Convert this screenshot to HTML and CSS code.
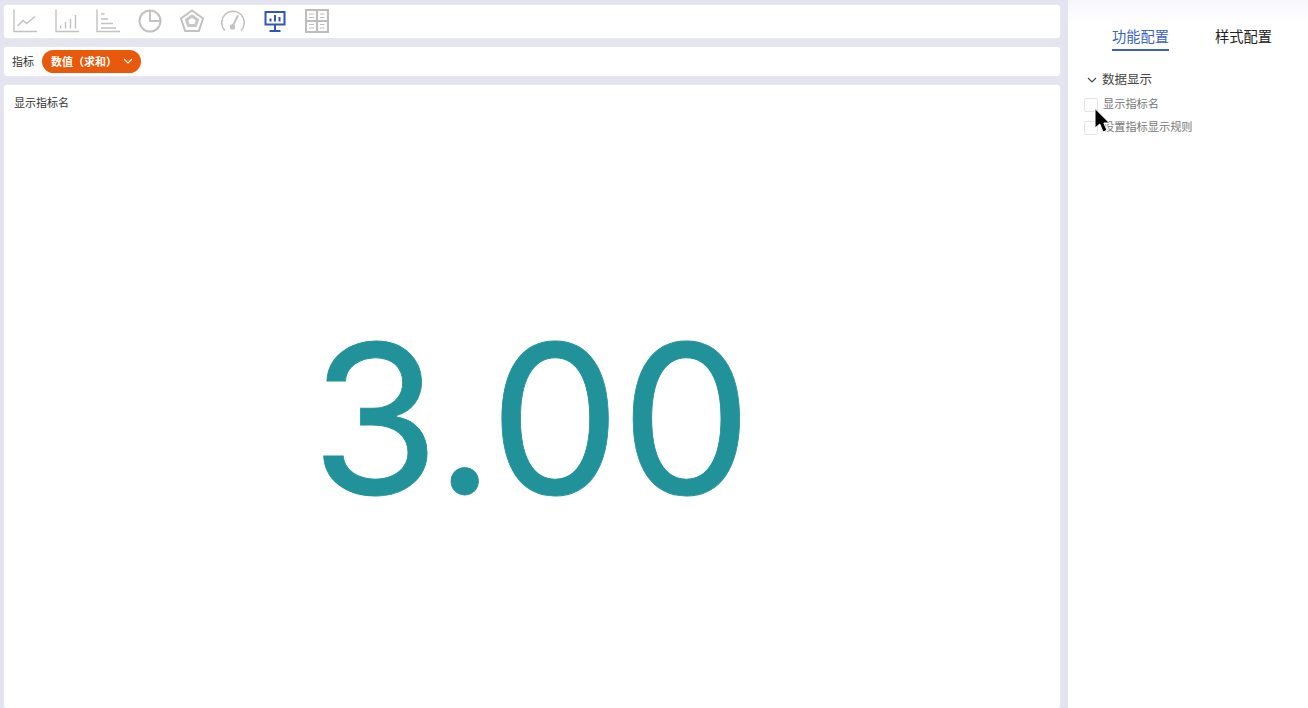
FILE: index.html
```html
<!DOCTYPE html>
<html lang="zh-CN">
<head>
  <meta charset="UTF-8">
  <title>功能配置</title>
  <link rel="stylesheet" href="styles.css">
</head>
<body>
  <div class="main">
    <div class="card toolbar">
      <svg class="chart-icon" viewBox="0 0 24 24"><path d="M1 0.500V22.500H24M4.500 17L10 11.500L13.500 14.500L22 7.500"/></svg>
      <svg class="chart-icon" viewBox="0 0 24 24"><path d="M1 0.500V22.500H24M5.500 19.500V16.500M10.500 19.500V13M15.500 19.500V10M20.500 19.500V6"/></svg>
      <svg class="chart-icon" viewBox="0 0 24 24"><path d="M1 0.500V22.500H24M5 5H8.500M5 10H12M5 14.500H17M5 19H20"/></svg>
      <svg class="chart-icon thick" viewBox="0 0 24 24"><circle cx="12" cy="12" r="10.500"/><path d="M12 1.500V12H22.500"/></svg>
      <svg class="chart-icon thick" viewBox="0 0 24 24"><path d="M12 1.500L23 9.500L18.800 22H5.200L1 9.500Z"/><path class="heavy" d="M12 7L17.500 10.800L15.500 16.500H8.500L6.500 10.800Z"/></svg>
      <svg class="chart-icon gauge" viewBox="0 0 24 24"><path d="M4 21.500A11.300 11.300 0 1 1 20 21.500"/><path class="needle" d="M11.500 17.500L17 6.500"/><circle class="dot" cx="11.500" cy="18" r="2"/></svg>
      <svg class="chart-icon active" viewBox="0 0 24 24"><path d="M2.500 3H21.500V15.500H2.500ZM12 15.500V22M6.500 22H17.500M7.500 12.500V9.500M12 12.500V6M16.500 12.500V8"/></svg>
      <svg class="chart-icon grid" viewBox="0 0 24 24"><path d="M1 1H23V23H1ZM1 12H23M12 1V23"/><path class="thin" d="M4 5H9M4 8.500H9M15 5H19.500M15 8.500H19.500M4 15.500H9M4 19H9M15 15.500H19.500M15 19H19.500"/></svg>
    </div>
    <div class="card metric-bar">
      <span class="metric-label">指标</span>
      <span class="metric-pill">数值（求和）<svg class="pill-arrow" viewBox="0 0 10 6"><path d="M1 1L5 5L9 1"/></svg></span>
    </div>
    <div class="card chart-card">
      <div class="chart-title">显示指标名</div>
      <div class="big-value">3.00</div>
    </div>
  </div>

  <div class="side">
    <div class="tabs">
      <span class="tab tab-active">功能配置</span>
      <span class="tab">样式配置</span>
    </div>
    <div class="group-head">
      <svg class="group-arrow" viewBox="0 0 10 6"><path d="M1 1L5 5L9 1"/></svg>
      <span>数据显示</span>
    </div>
    <label class="check-row"><span class="check-box"></span>显示指标名</label>
    <label class="check-row"><span class="check-box"></span>设置指标显示规则</label>
    <svg class="cursor" viewBox="0 0 16 26"><path d="M1 1V20.500L5.800 16.500L9 24.500L13 22.800L9.800 15.500H15.500Z"/></svg>
  </div>
</body>
</html>
```

FILE: styles.css
```css
html, body {
  height: 100%;
}

body {
  margin: 0;
  display: flex;
  overflow: hidden;
  background-color: #e3e4ef;
  font-family: "Liberation Sans", "Noto Sans CJK SC", sans-serif;
  color: #333;
}

.main {
  width: 1056px;
  margin-left: 4px;
  padding-top: 5px;
  display: flex;
  flex-direction: column;
  gap: 9px;
}

.card {
  background-color: #fff;
  border-radius: 3px;
  box-shadow: 0 0 2px rgba(255, 255, 255, 0.6);
}

.toolbar {
  height: 33px;
  padding: 0 0 2px 9px;
  box-sizing: border-box;
  display: flex;
  align-items: center;
  gap: 17.700px;
}

.chart-icon {
  width: 24px;
  height: 24px;
  flex: none;
}

.chart-icon path,
.chart-icon circle {
  fill: none;
  stroke: #c2c2c2;
  stroke-width: 1.400;
}

.chart-icon.thick path,
.chart-icon.thick circle {
  stroke-width: 2;
}

.chart-icon.thick .heavy {
  stroke-width: 3;
  stroke: #c8c8c8;
}

.chart-icon.gauge path {
  stroke-width: 1.500;
}

.chart-icon.gauge .needle {
  stroke-width: 2;
}

.chart-icon .dot {
  fill: #c2c2c2;
}

.chart-icon.active path {
  stroke: #2f55b5;
  stroke-width: 2;
}

.chart-icon.grid path {
  stroke: #bdbdbd;
  stroke-width: 2.200;
}

.chart-icon.grid .thin {
  stroke-width: 1.200;
}

.metric-bar {
  height: 29px;
  padding: 0 0 1px 8px;
  box-sizing: border-box;
  display: flex;
  align-items: center;
  gap: 8px;
}

.metric-label {
  font-size: 11px;
}

.metric-pill {
  height: 23px;
  width: 99px;
  padding-left: 9px;
  box-sizing: border-box;
  border-radius: 12px;
  background-color: #e8590c;
  color: #fff;
  font-size: 11px;
  font-weight: bold;
  display: flex;
  align-items: center;
}

.pill-arrow {
  width: 10px;
  height: 6px;
  margin-left: 6px;
}

.pill-arrow path,
.group-arrow path {
  fill: none;
  stroke: currentColor;
  stroke-width: 1.100;
}

.chart-card {
  flex: 1;
  display: flex;
  flex-direction: column;
  min-height: 0;
}

.chart-title {
  padding: 11px 0 0 10px;
  font-size: 11px;
  line-height: 15px;
}

.big-value {
  margin-top: 187px;
  padding-right: 1px;
  text-align: center;
  font-family: Inter, sans-serif;
  font-size: 208px;
  -webkit-text-stroke: 0.800px #22929a;
  line-height: 240px;
  color: #22929a;
}

.side {
  position: relative;
  width: 240px;
  margin-left: 8px;
  background: linear-gradient(#f7f7fb, #fff 24px);
  box-sizing: border-box;
  padding: 0 16px;
}

.tabs {
  display: flex;
  gap: 46px;
  padding: 27px 0 0 28px;
}

.tab {
  font-size: 14.250px;
  line-height: 20px;
  padding-bottom: 2px;
  color: #222;
}

.tab-active {
  color: #3c5fc4;
  border-bottom: 2px solid #3c5fc4;
}

.group-head {
  margin-top: 20px;
  display: flex;
  align-items: center;
  gap: 5px;
  font-size: 12.500px;
  line-height: 18px;
  padding-left: 3px;
  color: #444;
}

.group-arrow {
  width: 10px;
  height: 6px;
}

.check-row {
  display: flex;
  align-items: center;
  gap: 5px;
  font-size: 11.200px;
  line-height: 15px;
  color: #777;
  margin-top: 8px;
}

.check-box {
  width: 12px;
  height: 12px;
  border: 1px solid #e4e4e4;
  border-radius: 2px;
  background-color: #fff;
}

.cursor {
  position: absolute;
  left: 26px;
  top: 106px;
  width: 16px;
  height: 29px;
}

.cursor path {
  fill: #000;
  stroke: #fff;
  stroke-width: 1;
}
```
